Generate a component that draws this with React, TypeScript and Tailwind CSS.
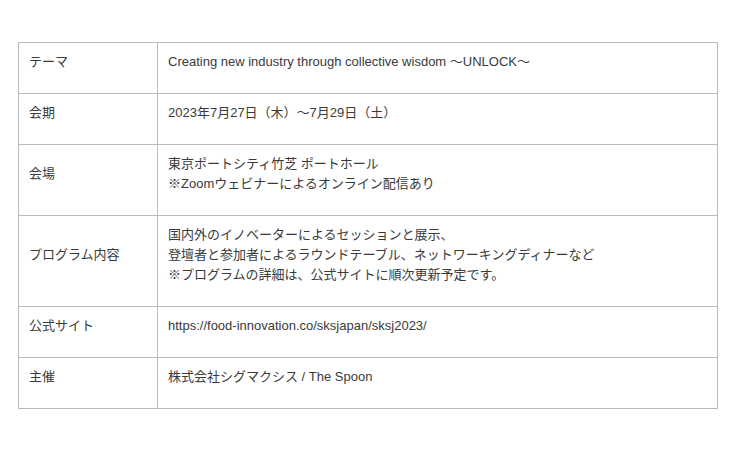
import React from "react";

const rows: { label: string; lines: string[] }[] = [
  { label: "テーマ", lines: ["Creating new industry through collective wisdom ～UNLOCK～"] },
  { label: "会期", lines: ["2023年7月27日（木）～7月29日（土）"] },
  { label: "会場", lines: ["東京ポートシティ竹芝 ポートホール", "※Zoomウェビナーによるオンライン配信あり"] },
  {
    label: "プログラム内容",
    lines: [
      "国内外のイノベーターによるセッションと展示、",
      "登壇者と参加者によるラウンドテーブル、ネットワーキングディナーなど",
      "※プログラムの詳細は、公式サイトに順次更新予定です。",
    ],
  },
  { label: "公式サイト", lines: ["https://food-innovation.co/sksjapan/sksj2023/"] },
  { label: "主催", lines: ["株式会社シグマクシス / The Spoon"] },
];

export default function App() {
  return (
    <div
      className="w-[740px] h-[449px] bg-white pt-[42px] pl-[18px]"
      style={{ fontFamily: '"Liberation Sans", Arial, "Noto Sans CJK JP", sans-serif' }}
    >
      <table className="w-[700px] border-collapse text-[13px] leading-[20px] text-[#3a3a3a]">
        <tbody>
          {rows.map((r) => (
            <tr key={r.label}>
              <td className="w-[139px] border border-[#bbb] align-middle px-[10px] pt-[9px] pb-[8px]">
                <p className="mb-[13px]">{r.label}</p>
              </td>
              <td className="border border-[#bbb] align-middle px-[10px] pt-[9px] pb-[8px]">
                <p className="mb-[13px]">
                  {r.lines.map((l, i) => (
                    <React.Fragment key={i}>
                      {i > 0 && <br />}
                      {l}
                    </React.Fragment>
                  ))}
                </p>
              </td>
            </tr>
          ))}
        </tbody>
      </table>
    </div>
  );
}
